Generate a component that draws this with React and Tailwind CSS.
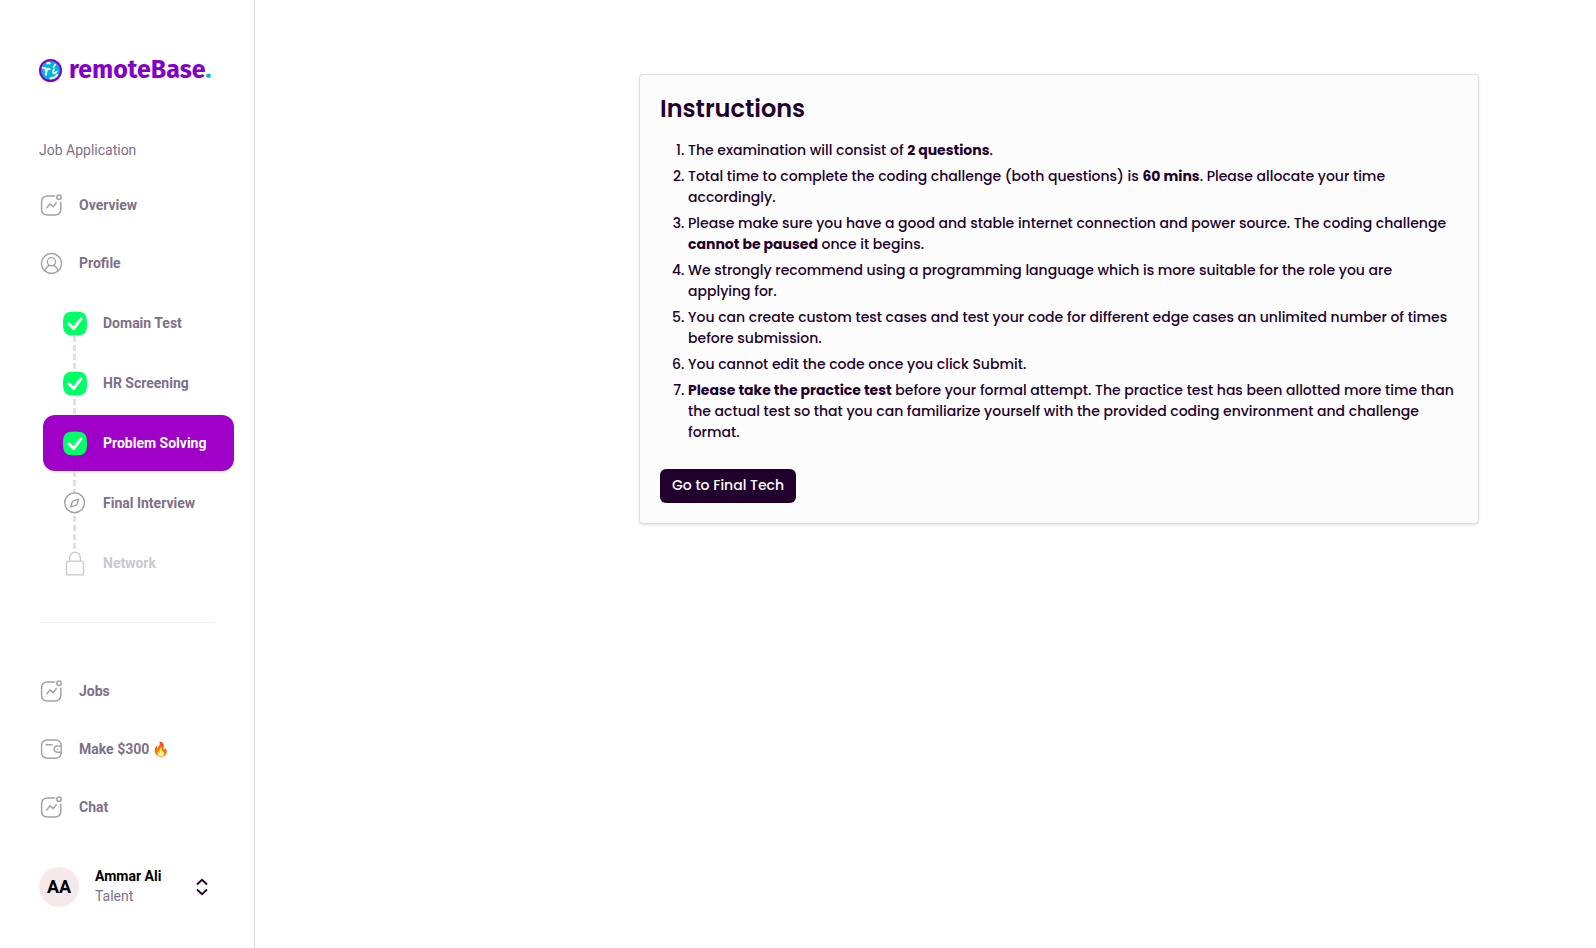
function ActivityIcon() {
  return (
    <svg className="size-6 shrink-0" viewBox="-.6 0 24 24" fill="none" stroke="#a3a3a3" strokeWidth="1.5" strokeLinecap="round" strokeLinejoin="round" aria-hidden="true">
      <path d="M15 3H8C4.300 3 2 5.300 2 9v7c0 3.700 2.300 6 6 6h7.200c3.700 0 6-2.300 6-6V9.200" />
      <circle cx="19.400" cy="4.200" r="2.200" />
      <path d="M7.300 14.800l3-3.900 3.400 2.700 3-3.800" />
    </svg>
  );
}

function ProfileIcon() {
  return (
    <svg className="size-6 shrink-0" viewBox="0 0 24 24" fill="none" stroke="#a3a3a3" strokeWidth="1.300" strokeLinecap="round" strokeLinejoin="round" aria-hidden="true">
      <circle cx="12.500" cy="12.500" r="10" />
      <circle cx="12.500" cy="10.800" r="4.100" />
      <path d="M6.300 20c.5-3 2.400-5 4.300-5.500M18.700 20c-.5-3-2.400-5-4.300-5.500" />
    </svg>
  );
}

function WalletIcon() {
  return (
    <svg className="size-6 shrink-0" viewBox="-.6 0 24 24" fill="none" stroke="#a3a3a3" strokeWidth="1.400" strokeLinecap="round" strokeLinejoin="round" aria-hidden="true">
      <path d="M21.600 15.200h-4a3.100 3.100 0 0 1 0-6.200h4" />
      <path d="M8 3h7.600c3.700 0 6 2.300 6 5.800v6.600c0 3.500-2.300 5.800-6 5.800H8c-3.700 0-6-2.300-6-5.800V8.800C2 5.300 4.300 3 8 3z" />
      <path d="M6.500 7.800h6M17.700 12.100h.3" />
    </svg>
  );
}

function CheckIcon() {
  return (
    <svg className="size-6 shrink-0 overflow-visible" viewBox="0 -.5 24 24" fill="none" aria-hidden="true">
      <path d="M12 0c9.500 0 12 2.500 12 12s-2.500 12-12 12S0 21.500 0 12 2.500 0 12 0z" fill="#00ff66" />
      <path d="M6 12.300l4.600 4.700L18 7.400" stroke="#fff" strokeWidth="3" strokeLinecap="round" strokeLinejoin="round" />
    </svg>
  );
}

function CompassIcon() {
  return (
    <svg className="size-6 shrink-0" viewBox="0 0 24 24" fill="none" stroke="#a3a3a3" strokeWidth="1.400" strokeLinejoin="round" aria-hidden="true">
      <circle cx="11.600" cy="11.800" r="9.900" fill="#fff" />
      <path d="M15.600 8.200l-1.500 4.700-1.300 1.400-5 1.500 1.400-4.800 1.400-1.400z" />
    </svg>
  );
}

function LockIcon() {
  return (
    <svg className="size-6 shrink-0 overflow-visible" viewBox="0 -.6 24 24" fill="none" stroke="#cbc8d0" strokeWidth="1.400" strokeLinecap="round" aria-hidden="true">
      <path d="M6.700 9.500V6a5.300 5.300 0 0 1 10.600 0v3.500" />
      <rect x="3.500" y="9.500" width="17" height="13.800" rx="2" />
    </svg>
  );
}

function GlobeLogo() {
  return (
    <svg className="size-6 shrink-0" viewBox="0 0 24 24" fill="none" aria-hidden="true">
      <circle cx="11.500" cy="12.500" r="10.500" fill="#00b4e0" stroke="#8400c8" strokeWidth="2" />
      <g stroke="#fff" strokeLinecap="round" strokeLinejoin="round">
        <path d="M3.900 9.800c1.700-.3 2.800.6 3.100 2.300M6.900 16.800c0-2.300.2-4 1.200-5.100.8-.8 1.700-.9 2.500-.6" strokeWidth="2.100" />
        <path d="M8.400 5.200c.8-.4 1.500-.3 2.100 0" strokeWidth="2.400" />
        <path d="M16.300 6.500c-.5.900-1.300 1.500-1.700 2.600" strokeWidth="1.600" />
        <path d="M14.900 11.400c-1 1.700-1.100 3.900.5 4 1 .1 1.700-.7 2.200-1.700" strokeWidth="1.900" />
        <path d="M11.500 20.300c2.900 0 5.200-1.200 6.800-3.400" strokeWidth="1.900" />
      </g>
    </svg>
  );
}

const steps = [
  { label: "Domain Test", Icon: CheckIcon, tone: "text-[#7d7089]" },
  { label: "HR Screening", Icon: CheckIcon, tone: "text-[#7d7089]" },
  { label: "Problem Solving", Icon: CheckIcon, tone: "bg-[#a000c8] text-white", current: true },
  { label: "Final Interview", Icon: CompassIcon, tone: "text-[#7d7089]" },
  { label: "Network", Icon: LockIcon, tone: "text-[#cbc8d0]" },
];

function NavLink({ label, Icon }) {
  return (
    <li>
      <a href="#" className="flex h-6 items-center gap-4 text-sm font-bold text-[#7d7089]">
        <Icon />
        {label}
      </a>
    </li>
  );
}

function Sidebar() {
  return (
    <aside className="w-[255px] shrink-0 border-r border-[#dedede] pt-[58px] font-['Roboto','Noto_Color_Emoji',sans-serif]">
      <a href="#" className="ml-[39px] flex h-6 items-center gap-1.5 font-['Fira_Sans','Roboto',sans-serif] text-[25px] font-bold text-[#8400c8]">
        <GlobeLogo />
        <span className="pt-0.5">remoteBase<span className="text-[#00b8e0]">.</span></span>
      </a>
      <nav aria-label="Job application">
        <h2 className="mt-[58px] ml-[39px] text-sm text-[#7d7089]">Job Application</h2>
        <ul className="mt-[33px] ml-[39px] flex flex-col gap-[34px]">
          <NavLink label="Overview" Icon={ActivityIcon} />
          <NavLink label="Profile" Icon={ProfileIcon} />
        </ul>
        <div className="relative mt-5 mr-5 ml-[43px]">
          <div className="absolute top-[41px] left-[30px] h-[215px] w-[3px] bg-[repeating-linear-gradient(to_bottom,#e0e0e0_0_6px,transparent_6px_9px)]" />
          <ul className="relative flex flex-col gap-1">
            {steps.map(({ label, Icon, tone, current }) => (
              <li key={label}>
                <a href="#" aria-current={current ? "step" : undefined} className={`flex h-14 items-center gap-4 rounded-xl pl-5 text-sm font-bold ${tone}`}>
                  <Icon />
                  {label}
                </a>
              </li>
            ))}
          </ul>
        </div>
        <hr className="mt-[31px] mr-10 ml-[39px] border-[#eeeef3]" />
        <ul className="mt-14 ml-[39px] flex flex-col gap-[34px]">
          <NavLink label="Jobs" Icon={ActivityIcon} />
          <NavLink label="Make $300 🔥" Icon={WalletIcon} />
          <NavLink label="Chat" Icon={ActivityIcon} />
        </ul>
      </nav>
      <button type="button" aria-label="Account menu" className="mt-[47px] mr-[39px] ml-[39px] flex w-[175px] items-center text-left">
        <span className="flex size-10 items-center justify-center rounded-full bg-[#f6e8eb] text-lg font-bold text-black">AA</span>
        <span className="ml-4 flex-1 pb-0.5 text-sm">
          <span className="block font-bold text-black">Ammar Ali</span>
          <span className="block text-[#7d7089]">Talent</span>
        </span>
        <svg className="mr-0.5 size-5" viewBox="0 0 20 20" fill="none" stroke="#22002e" strokeWidth="1.800" aria-hidden="true">
          <path d="M5 7.500l5-4.700 5 4.700M5 12.500l5 4.700 5-4.700" />
        </svg>
      </button>
    </aside>
  );
}

export default function App() {
  return (
    <div className="flex min-h-screen bg-white">
      <Sidebar />
      <main className="flex flex-1 items-start justify-end pt-[74px] pr-[117px] pl-8 font-['Poppins','Inter',sans-serif] text-[#22002e]">
        <section className="w-full max-w-[840px] rounded-sm border border-[#e0e0e0] bg-[#fcfcfc] p-5 shadow-sm">
          <h1 className="text-2xl leading-7 font-semibold">Instructions</h1>
          <ol className="mt-[17px] flex list-decimal flex-col gap-[5px] pl-7 text-sm leading-[21px] font-medium">
            <li>The examination will consist of <b>2 questions</b>.</li>
            <li>Total time to complete the coding challenge (both questions) is <b>60 mins</b>. Please allocate your time accordingly.</li>
            <li>Please make sure you have a good and stable internet connection and power source. The coding challenge <b>cannot be paused</b> once it begins.</li>
            <li>We strongly recommend using a programming language which is more suitable for the role you are applying for.</li>
            <li>You can create custom test cases and test your code for different edge cases an unlimited number of times before submission.</li>
            <li>You cannot edit the code once you click Submit.</li>
            <li><b>Please take the practice test</b> before your formal attempt. The practice test has been allotted more time than the actual test so that you can familiarize yourself with the provided coding environment and challenge format.</li>
          </ol>
          <button type="button" className="mt-[26px] h-[34px] rounded-md bg-[#22002e] px-3 pb-0.5 text-sm font-medium text-white">Go to Final Tech</button>
        </section>
      </main>
    </div>
  );
}
